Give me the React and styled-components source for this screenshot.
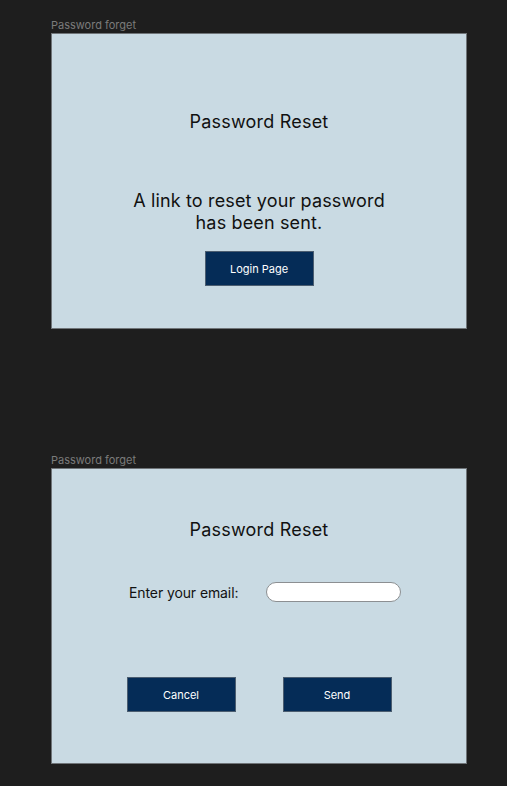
import React from 'react'
import styled, { createGlobalStyle } from 'styled-components'

const GlobalStyle = createGlobalStyle`
  html, body {
    margin: 0;
    padding: 0;
    background: #1e1e1e;
  }
  body {
    font-family: Inter, "Noto Sans", sans-serif;
  }
`

const Page = styled.div`
  display: flex;
  flex-direction: column;
  gap: 124px;
  padding: 18px 0 0 51px;
  min-height: 786px;
  box-sizing: border-box;
`

const Section = styled.section`
  display: flex;
  flex-direction: column;
  gap: 1px;
`

const FrameLabel = styled.div`
  font-size: 11px;
  line-height: 14px;
  color: #7b7b7b;
`

const Frame = styled.div`
  width: 416px;
  height: 296px;
  box-sizing: border-box;
  background: #c9dae3;
  border: 1px solid #6f7478;
  display: flex;
  flex-direction: column;
  align-items: center;
  padding-top: ${(p) => p.$top}px;
`

const Title = styled.h1`
  margin: 0;
  font-size: 18px;
  line-height: 22px;
  font-weight: 400;
  letter-spacing: 0.2px;
  color: #111;
`

const Message = styled.p`
  margin: ${(p) => p.$gap}px 0 17px;
  font-size: 18px;
  line-height: 22px;
  letter-spacing: 0.15px;
  text-align: center;
  color: #111;
`

const Button = styled.button`
  width: 109px;
  height: 35px;
  box-sizing: border-box;
  background: #052c57;
  border: 1px solid #4b5d70;
  color: #fff;
  font-family: inherit;
  font-size: 11px;
  cursor: pointer;
`

const EmailRow = styled.div`
  align-self: stretch;
  display: flex;
  align-items: center;
  padding-left: 77px;
  margin-top: 41px;
  height: 20px;
`

const EmailLabel = styled.label`
  width: 137px;
  font-size: 14px;
  letter-spacing: -0.1px;
  color: #111;
`

const EmailInput = styled.input`
  width: 135px;
  height: 20px;
  box-sizing: border-box;
  border: 1px solid #8c8f92;
  border-radius: 10px;
  background: #fff;
  outline: none;
`

const Actions = styled.div`
  display: flex;
  gap: 47px;
  margin-top: 75px;
`

export default function App() {
  return (
    <>
      <GlobalStyle />
      <Page>
        <Section>
          <FrameLabel>Password forget</FrameLabel>
          <Frame $top={77}>
            <Title>Password Reset</Title>
            <Message $gap={57}>
              A link to reset your password
              <br />
              has been sent.
            </Message>
            <Button>Login Page</Button>
          </Frame>
        </Section>
        <Section>
          <FrameLabel>Password forget</FrameLabel>
          <Frame $top={50}>
            <Title>Password Reset</Title>
            <EmailRow>
              <EmailLabel htmlFor="email">Enter your email:</EmailLabel>
              <EmailInput id="email" type="email" />
            </EmailRow>
            <Actions>
              <Button>Cancel</Button>
              <Button>Send</Button>
            </Actions>
          </Frame>
        </Section>
      </Page>
    </>
  )
}
